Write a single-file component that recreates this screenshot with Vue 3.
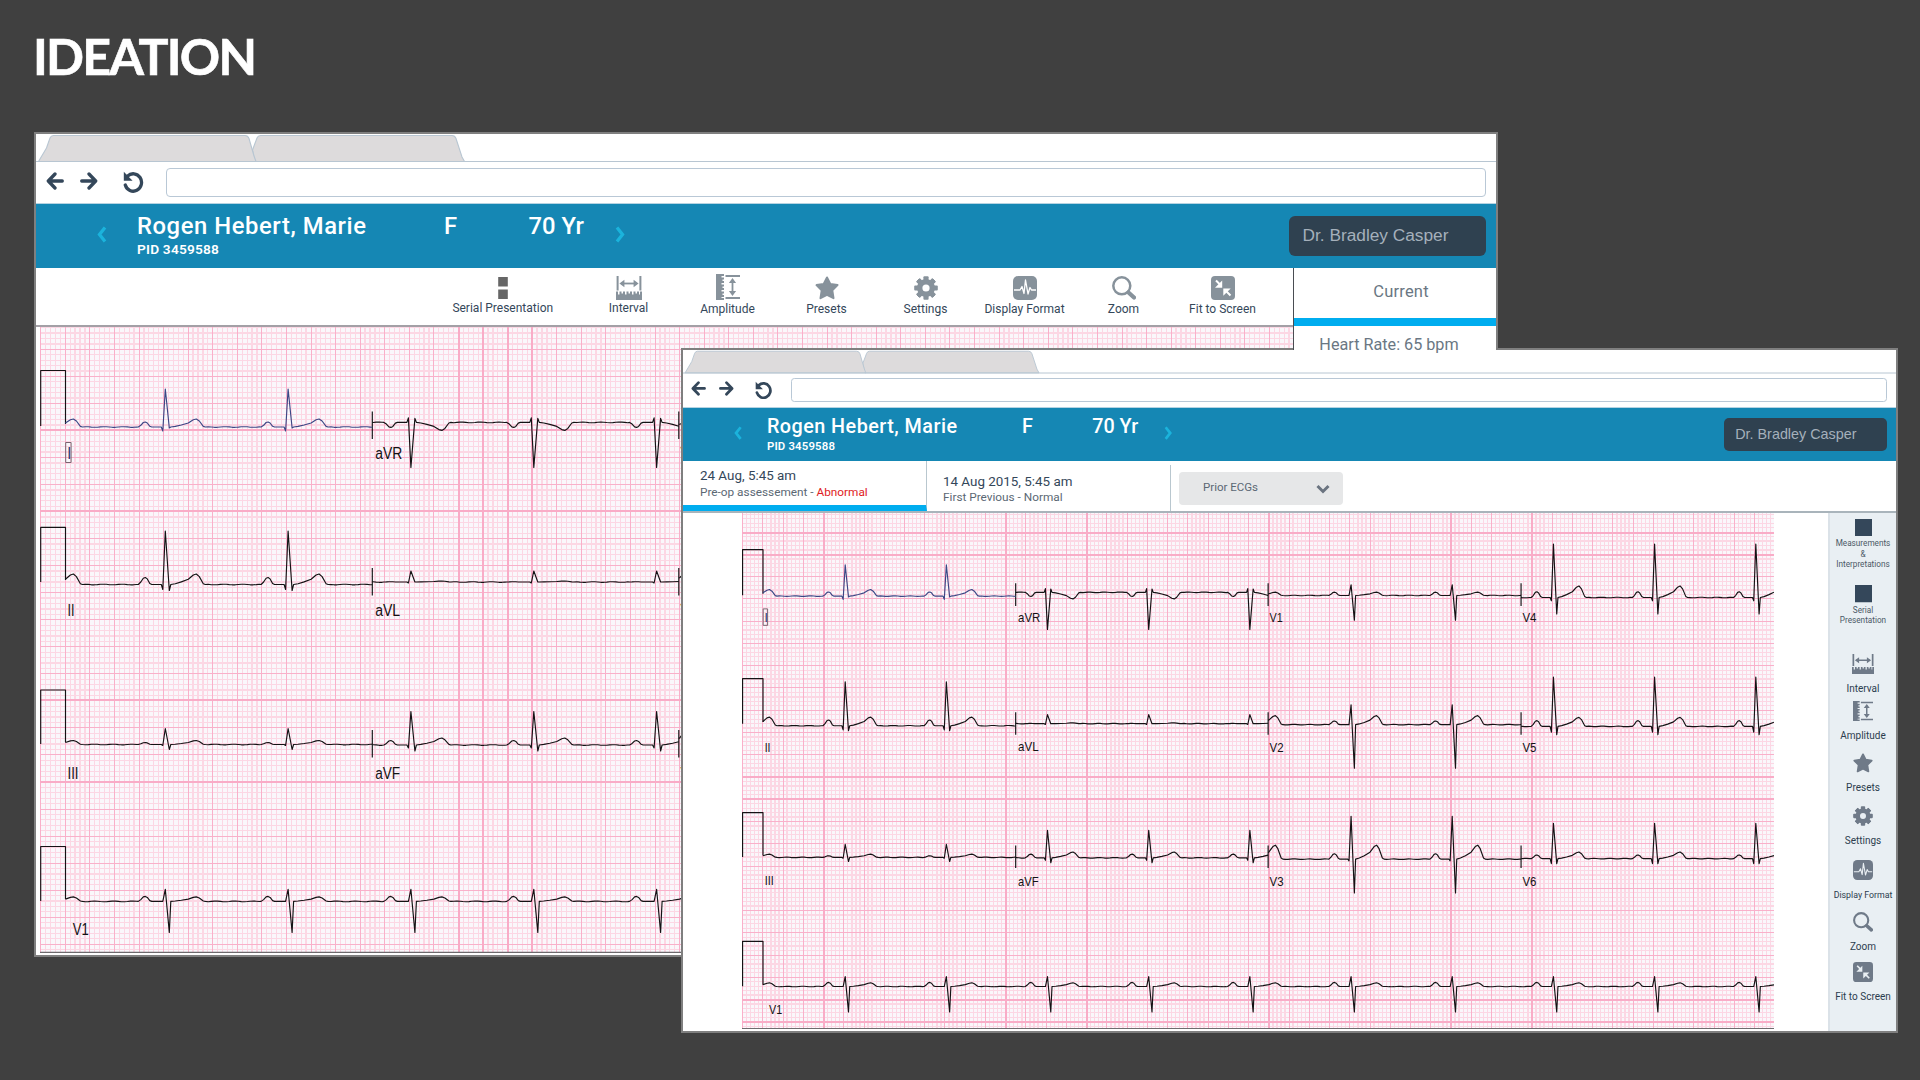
<template>
  <div class="slide">
    <!-- Icon sprite -->
    <svg class="sprite" aria-hidden="true">
      <symbol id="i-serial" viewBox="0 0 24 24"><path d="M7.2 1h9.6v9.6H7.2zM7.2 13.4h9.6V23H7.2z" fill="#666" /></symbol>
      <symbol id="i-square" viewBox="0 0 24 24" preserveAspectRatio="none"><path d="M0 0h24v24H0z" fill="#34475a" /></symbol>
      <symbol id="i-interval" viewBox="0 0 26 24" preserveAspectRatio="none">
        <path d="M1.6 0v14.5M24.4 0v14.5" stroke="currentColor" stroke-width="2" />
        <path d="M5 7.5h16" stroke="currentColor" stroke-width="1.8" />
        <path d="M3.4 7.5l5-3.7v7.4zM22.6 7.5l-5-3.7v7.4z" fill="currentColor" />
        <path d="M0 15.5h2v3h1.5v-3h2v2H7v-2h2v3h1.5v-3h2v2H14v-2h2v3h1.5v-3h2v2H21v-2h2v3h1v-3h2V24H0z" fill="currentColor" />
      </symbol>
      <symbol id="i-amplitude" viewBox="0 0 24 26" preserveAspectRatio="none">
        <path d="M0 0h8v2H5.5v1.5H8v2H6.5V7H8v2H5.5v1.5H8v2H6.5V14H8v2H5.5v1.500H8v2H6.5V21H8v2H5.5v1H8v2H0z" fill="currentColor" />
        <path d="M9.5 2H24M9.5 24H24" stroke="currentColor" stroke-width="2" />
        <path d="M16.5 6v14" stroke="currentColor" stroke-width="1.8" />
        <path d="M16.5 4l3.6 5h-7.2zM16.5 22l3.6-5h-7.2z" fill="currentColor" />
      </symbol>
      <symbol id="i-star" viewBox="0 0 24 24" preserveAspectRatio="none">
        <path d="M12 1.5l3.3 6.4 7.2 1.2-5.2 5.3 1.2 7.8-6.5-3.3-6.5 3.3 1.2-7.8-5.2-5.3 7.2-1.2z" fill="currentColor" stroke="currentColor" stroke-width="2" stroke-linejoin="round" />
      </symbol>
      <symbol id="i-gear" viewBox="0 0 24 24" preserveAspectRatio="none">
        <g fill="currentColor">
          <rect v-for="a in [0, 45, 90, 135]" :key="a" x="9.4" y="0.2" width="5.2" height="23.6" rx="1" :transform="`rotate(${a} 12 12)`" mask="url(#gear-hole)" />
        </g>
        <circle cx="12" cy="12" r="6.3" fill="none" stroke="currentColor" stroke-width="5.4" />
      </symbol>
      <mask id="gear-hole" maskUnits="userSpaceOnUse" x="0" y="0" width="24" height="24">
        <path d="M0 0h24v24H0z" fill="#fff" /><circle cx="12" cy="12" r="5" fill="#000" />
      </mask>
      <symbol id="i-display" viewBox="0 0 24 24" preserveAspectRatio="none">
        <rect width="24" height="24" rx="5" fill="currentColor" />
        <path d="M1 14h6l2-3.5 2 7L12.5 4l2.5 14 2-6.5 1.5 2.5H23" fill="none" stroke="var(--hole)" stroke-width="1.3" stroke-linejoin="round" />
      </symbol>
      <symbol id="i-zoom" viewBox="0 0 24 24" preserveAspectRatio="none">
        <circle cx="9.8" cy="9.8" r="8.5" fill="none" stroke="currentColor" stroke-width="2.5" />
        <path d="M16.5 16.5l5.5 5" stroke="currentColor" stroke-width="4.2" stroke-linecap="round" />
      </symbol>
      <symbol id="i-fit" viewBox="0 0 24 24" preserveAspectRatio="none">
        <rect width="24" height="24" rx="4" fill="currentColor" />
        <path d="M5 4.5l4 4M19.5 19.5l-4-4" stroke="var(--hole)" stroke-width="2" />
        <path d="M11.2 4.5v7.2H4zM12.3 12.5h7.4l-7.4 7.2z" fill="var(--hole)" />
      </symbol>
      <symbol id="i-arrow" viewBox="0 0 18 18">
        <path d="M16.3 9H3M9 2L2.3 9 9 16" fill="none" stroke="currentColor" stroke-width="3.3" stroke-linecap="round" stroke-linejoin="round" />
      </symbol>
      <symbol id="i-reload" viewBox="0 0 21 22">
        <path d="M4.5 5.2A8.3 8.7 0 1 1 2.3 14" fill="none" stroke="currentColor" stroke-width="3.3" stroke-linecap="round" />
        <path d="M.8.8v9h8.8z" fill="currentColor" />
      </symbol>
      <symbol id="i-chevron" viewBox="0 0 10 17">
        <path d="M8 1.5L2.5 8.5 8 15.5" fill="none" stroke="currentColor" stroke-width="3.3" />
      </symbol>
    </svg>

    <h1 class="title">IDEATION</h1>

    <section v-for="win in windows" :key="win.id" :class="['window', win.id]">
      <div class="chrome">
        <svg class="tabs" viewBox="0 0 1460 28.3" preserveAspectRatio="none">
          <g fill="#dddbdc" stroke="#b8c6d2" stroke-width="1.1">
            <path d="M216.5 16L221 4Q222 1.5 224.5 1.5H416Q419 1.5 420 4.5L426 23L428.5 27.5H219z" />
            <path d="M2.5 27.5L10.5 14L14 4Q15 1.5 17.5 1.5H209Q212 1.5 213 4.5L218 22L220 27.5z" />
          </g>
          <path d="M0 27.7H1460" stroke="#b8c6d2" stroke-width="1.2" />
        </svg>
        <div class="navbar">
          <svg class="nav-icon"><use href="#i-arrow" /></svg>
          <svg class="nav-icon forward"><use href="#i-arrow" /></svg>
          <svg class="nav-icon reload"><use href="#i-reload" /></svg>
          <div class="address"></div>
        </div>
      </div>

      <header class="patient">
        <svg class="chev"><use href="#i-chevron" /></svg>
        <div class="who">
          <div class="name">Rogen Hebert, Marie</div>
          <div class="pid">PID 3459588</div>
        </div>
        <div class="sex">F</div>
        <div class="age">70 Yr</div>
        <svg class="chev next"><use href="#i-chevron" /></svg>
        <div class="doctor"><span>Dr. Bradley Casper</span></div>
      </header>

      <div v-if="win.id === 'back'" class="body">
        <div class="toolbar">
          <div v-for="t in tools" :key="t.label" :class="['tool', t.icon]">
            <svg class="tool-icon"><use :href="'#i-' + t.icon" /></svg>
            <span>{{ t.label }}</span>
          </div>
        </div>
        <aside class="current">
          <div class="current-tab">Current</div>
          <p>Heart Rate: 65 bpm</p>
        </aside>
      </div>

      <div v-else class="visits">
        <div class="visit active">
          <div class="date">24 Aug, 5:45 am</div>
          <div class="note">Pre-op assessement - <b>Abnormal</b></div>
        </div>
        <div class="visit">
          <div class="date">14 Aug 2015, 5:45 am</div>
          <div class="note">First Previous - Normal</div>
        </div>
        <div class="prior">
          <span>Prior ECGs</span>
          <svg viewBox="0 0 14 10"><path d="M1.5 2L7 7.5 12.5 2" fill="none" stroke="#6b7480" stroke-width="3" /></svg>
        </div>
      </div>

      <div class="ecg-row">
        <svg class="ecg" viewBox="40 326 1253 627" preserveAspectRatio="none">
          <rect x="40" y="326" width="1253" height="627" fill="#faf7fb" />
          <path class="fine" :d="grid.fine" />
          <path class="coarse" :d="grid.coarse" />
          <path class="bold" :d="win.bold" />
          <path v-for="(p, i) in pulses" :key="'p' + i" class="trace" :d="p" />
          <path class="trace" :d="ticks" />
          <path v-for="l in leads" :key="l.id" :class="['trace', { picked: l.picked }]" :d="tracePath(l)" />
          <text v-for="l in leads" :key="'t' + l.id" :class="{ picked: l.picked }" :x="l.lx" :y="l.ly" :textLength="l.lw" lengthAdjust="spacingAndGlyphs">{{ l.name }}</text>
          <rect x="65.7" y="442.5" width="5.4" height="20" fill="none" stroke="#7a6570" vector-effect="non-scaling-stroke" />
          <path d="M40 952.4H1293" stroke="#6d6a6d" stroke-width="1.2" />
        </svg>
        <nav v-if="win.id === 'front'" class="side">
          <div v-for="t in sideTools" :key="t.label" :class="['side-item', t.icon]" :style="{ height: t.h + 'px' }">
            <svg><use :href="'#i-' + t.icon" /></svg>
            <span>{{ t.label }}</span>
          </div>
        </nav>
      </div>
    </section>
  </div>
</template>

<script setup>
const tools = [
  { icon: 'serial', label: 'Serial Presentation' },
  { icon: 'interval', label: 'Interval' },
  { icon: 'amplitude', label: 'Amplitude' },
  { icon: 'star', label: 'Presets' },
  { icon: 'gear', label: 'Settings' },
  { icon: 'display', label: 'Display Format' },
  { icon: 'zoom', label: 'Zoom' },
  { icon: 'fit', label: 'Fit to Screen' },
]

const sideTools = [
  { icon: 'square', label: 'Measurements\n&\nInterpretations', h: 66.5 },
  { icon: 'square', label: 'Serial\nPresentation', h: 69 },
  { icon: 'interval', label: 'Interval', h: 47 },
  { icon: 'amplitude', label: 'Amplitude', h: 52 },
  { icon: 'star', label: 'Presets', h: 52.5 },
  { icon: 'gear', label: 'Settings', h: 54.5 },
  { icon: 'display', label: 'Display Format', h: 52 },
  { icon: 'zoom', label: 'Zoom', h: 50 },
  { icon: 'fit', label: 'Fit to Screen', h: 40 },
]

const hLine = y => `M40 ${y}H1293`
const vLine = x => `M${x} 326V953`

const windows = [
  { id: 'back', bold: [429.8, 511, 700.3, 781.5].map(hLine).concat([458.6, 483.2, 507.8, 532.3].map(vLine)).join('') },
  { id: 'front', bold: [349.7, 376.7, 647, 674, 917.5, 944.5].map(hLine).concat([139, 360.2, 458.6, 679.8, 901, 999.3].map(vLine)).join('') },
]

// 5 x 5 paper grid
const grid = { fine: '', coarse: '' }
for (let i = 0; i < 256; i++) {
  const x = +(40.7 + i * 4.915).toFixed(2)
  if (x < 1293) grid[i % 5 ? 'fine' : 'coarse'] += vLine(x)
}
for (let i = 1; i < 118; i++) {
  const y = +(322.3 + i * 5.408).toFixed(2)
  if (y > 326 && y < 953) grid[i % 5 ? 'fine' : 'coarse'] += hLine(y)
}

const cols = [65.3, 372.3, 678.8, 985.9, 1293]

// p, q, r, s, t are wave heights over the base line
const leads = [
  { id: 'I', name: 'I', col: 0, base: 427, p: 5, q: -4, r: 38, s: -1, t: 8, lx: 67.2, ly: 458.5, lw: 4, picked: true },
  { id: 'II', name: 'II', col: 0, base: 584.5, p: 7, q: -5, r: 53.5, s: -6, t: 10.5, lx: 67.5, ly: 616, lw: 7 },
  { id: 'III', name: 'III', col: 0, base: 744.5, p: 2, q: -1, r: 16, s: -5, t: 4, lx: 67.5, ly: 778.5, lw: 11 },
  { id: 'aVR', name: 'aVR', col: 1, base: 422.4, p: -5, q: 4.5, r: -45, s: 4, t: -8, lx: 375.2, ly: 459, lw: 27 },
  { id: 'aVL', name: 'aVL', col: 1, base: 582, p: 0.3, q: -1, r: 11, s: 0, t: 1, lx: 375.2, ly: 615.8, lw: 25 },
  { id: 'aVF', name: 'aVF', col: 1, base: 745, p: 4.5, q: -3, r: 33.5, s: -6, t: 7, lx: 375.2, ly: 778.8, lw: 25 },
  { id: 'V1', name: 'V1', col: 2, base: 426.2, p: 4, q: 0, r: 13, s: -30, t: 4, lx: 680.5, ly: 459, lw: 16 },
  { id: 'V2', name: 'V2', col: 2, base: 583.2, p: 4.5, q: 0, r: 24, s: -53, t: 11, lx: 680.5, ly: 616, lw: 17 },
  { id: 'V3', name: 'V3', col: 2, base: 746.6, p: 6.5, q: -2, r: 52, s: -41, t: 17, lx: 680.5, ly: 778.8, lw: 17 },
  { id: 'V4', name: 'V4', col: 3, base: 428.7, p: 7, q: -4, r: 65, s: -20, t: 14, lx: 987.5, ly: 459, lw: 17 },
  { id: 'V5', name: 'V5', col: 3, base: 585.3, p: 7, q: -7, r: 60, s: -10, t: 11, lx: 987.5, ly: 616, lw: 17 },
  { id: 'V6', name: 'V6', col: 3, base: 746, p: 4.5, q: -6, r: 43, s: -6, t: 8, lx: 987.5, ly: 778.8, lw: 17 },
  { id: 'rhythm', name: 'V1', col: 0, full: true, base: 901.4, p: 5, q: 0, r: 12, s: -31, t: 4.5, lx: 72.8, ly: 935, lw: 16 },
]

function tracePath(l) {
  const x0 = cols[l.col]
  const x1 = l.full ? cols[4] : cols[l.col + 1]
  const pts = []
  for (let k = 0; k < 12; k++) {
    const c = 42.4 + k * 122.85
    const beat = [
      [-27, 0], [-24.5, l.p * 0.35], [-22, l.p * 0.9], [-20, l.p], [-18, l.p * 0.8], [-15.5, l.p * 0.15], [-13.5, 0], [-4, 0],
      [-2.5, l.q], [0, l.r], [4, l.s], [5.5, 0], [10, l.t * 0.08], [16, l.t * 0.25], [23, l.t * 0.5],
      [28, l.t * 0.9], [31, l.t], [34, l.t * 0.75], [38, l.t * 0.08], [40, 0],
    ]
    // slight muscle noise on the flat part
    for (let n = 43; n < 95; n += 3) beat.push([n, Math.sin(n * 12.9 + k * 7 + l.base) * 0.35])
    beat.forEach(([dx, h]) => pts.push([c + dx, l.base - h]))
  }
  const out = []
  for (let i = 1; i < pts.length; i++) {
    const [ax, ay] = pts[i - 1]
    const [bx, by] = pts[i]
    const at = x => ay + ((by - ay) * (x - ax)) / (bx - ax)
    if (ax < x0 && bx >= x0) out.push([x0, at(x0)])
    if (bx >= x0 && bx <= x1) out.push([bx, by])
    if (ax <= x1 && bx > x1) out.push([x1, at(x1)])
  }
  return 'M' + out.map(([x, y]) => `${x.toFixed(1)} ${y.toFixed(1)}`).join('L')
}

const pulses = [[370.5, 426], [527.3, 582], [690, 744], [846.5, 901]]
  .map(([top, low]) => `M40.7 ${low}V${top}H65.5V${low - 2}`)

const ticks = cols.slice(1, 4)
  .map(x => [411.5, 568, 730].map(y => `M${x} ${y}v27.5`).join(''))
  .join('')
</script>

<style>
body { margin: 0; background: #404040; }
</style>

<style scoped>
.slide { position: relative; width: 1920px; height: 1080px; overflow: hidden; background: #404040; font-family: Roboto, "Noto Sans", sans-serif; color: #34475a; }
.sprite { position: absolute; width: 0; height: 0; }
.title { margin: 0; padding: 26px 0 0 33px; font: 700 50px/60px Lato, sans-serif; color: #fff; letter-spacing: -1.8px; -webkit-text-stroke: 0.6px #fff; }

/* The windows lie on the slide canvas; everything inside scales with em */
.window { position: absolute; box-sizing: border-box; border: 2px solid #7f7f7f; background: #fff; display: flex; flex-direction: column; overflow: hidden; }
.back { left: 34px; top: 132px; width: 1464px; height: 825px; font-size: 10px; --icon: #87929b; --hole: #fff; }
.front { left: 681px; top: 348px; width: 1217px; height: 685px; font-size: 8.31px; --icon: #6f7a88; --hole: #e9eff3; }

.chrome { height: 6.95em; box-sizing: border-box; border-bottom: 1px solid #b5d3e2; flex: none; }
.tabs { display: block; width: 100%; height: 2.83em; }
.navbar { display: flex; align-items: center; height: 4em; padding: 0 1.05em 0 0.95em; color: #34475a; }
.nav-icon { width: 1.8em; height: 1.8em; flex: none; margin-top: -0.35em; }
.forward { transform: scaleX(-1); margin-left: 1.6em; }
.reload { width: 2.1em; height: 2.2em; margin: 0 2.15em 0 2.55em; }
.address { flex: 1; height: 2.95em; box-sizing: border-box; border: 1px solid #b9c8d6; border-radius: 0.4em; }

.patient { display: flex; flex: none; height: 6.45em; background: #1587b4; color: #fff; padding: 0 1.05em 0 6.1em; box-sizing: border-box; }
.chev { width: 1em; height: 1.7em; color: #1bb3dc; margin-top: 2.25em; flex: none; }
.next { transform: scaleX(-1); }
.who { width: 30.7em; padding-left: 3em; }
.name, .sex, .age { font-size: 2.38em; line-height: 1.2em; font-weight: 500; margin-top: 0.37em; white-space: nowrap; }
.name { letter-spacing: 0.024em; }
.pid { font-size: 1.37em; line-height: 1.3em; font-weight: 600; margin-top: 0; letter-spacing: 0.015em; }
.sex { width: 3.55em; }
.age { width: 3.63em; }
.doctor { margin: 1.2em 0 0 auto; width: 19.7em; height: 4em; box-sizing: border-box; padding-left: 1.4em; border-radius: 0.6em; background: #2f4150; color: #a5b0bb; display: flex; align-items: center; font-family: "Liberation Sans", Arial, sans-serif; }
.doctor span { font-size: 1.73em; white-space: nowrap; }

.body { display: flex; height: 59px; flex: none; position: relative; z-index: 1; }
.toolbar { flex: 1; display: grid; grid-template-columns: 152.5px repeat(7, 99px); padding: 6px 0 0 390.5px; border-bottom: 2px solid #a3a0a6; box-sizing: border-box; }
.tool { display: flex; flex-direction: column; align-items: center; font-size: 12px; white-space: nowrap; }
.tool-icon { width: 24px; height: 24px; margin-top: 2px; color: var(--icon); }
.tool.interval .tool-icon { width: 26px; }
.tool.amplitude .tool-icon { height: 26px; margin: 0; }
.tool.serial .tool-icon { margin: 2px 0 0; }
.tool.serial span, .tool.interval span { margin-top: 0; }
.tool span { line-height: 16px; margin-top: 1px; }
.current { width: 202px; height: 82px; border-left: 1px solid #4a4d52; background: #fff; text-align: center; color: #6a7783; }
.current-tab { height: 50px; line-height: 48px; padding-left: 12px; border-bottom: 8px solid #00adef; font-size: 16.5px; letter-spacing: 0.2px; }
.current p { margin: 9px 12px 0 0; line-height: 20px; font-size: 16.2px; }

.visits { display: flex; flex: none; height: 50px; border-bottom: 2px solid #a9b4bb; box-sizing: content-box; }
.visit { box-sizing: border-box; width: 244px; padding: 8px 0 0 16px; border-right: 1px solid #b9c7cf; margin-top: 4px; }
.visit.active { margin-top: 0; padding: 5.5px 0 0 17px; border-bottom: 6px solid #00adef; }
.date { font-size: 13.4px; line-height: 17px; white-space: nowrap; }
.note { font-size: 11.8px; line-height: 15px; color: #5b6874; white-space: nowrap; }
.active .note { margin-top: 1px; }
.note b { font-weight: 400; color: #e01b24; }
.prior { display: flex; align-items: center; justify-content: space-between; box-sizing: border-box; width: 164px; height: 33px; margin: 11px 0 0 8px; padding: 0 13px 3px 24px; border-radius: 4px; background: #e6e7e8; font-size: 11.5px; color: #5b6874; }
.prior svg { width: 14px; height: 10px; margin-top: 3px; }

.ecg-row { display: flex; flex: 1; }
.ecg { display: block; flex: none; }
.back .ecg { width: 1253px; height: 627px; margin: -1px 0 0 4px; }
.front .ecg { width: 1032px; height: 516px; margin: -0.4px 0 0 59.3px; }
.fine, .coarse, .bold { fill: none; vector-effect: non-scaling-stroke; shape-rendering: crispEdges; }
.fine { stroke: #fcd7e4; stroke-width: 1.25; }
.coarse { stroke: #f9b0ca; stroke-width: 1; }
.bold { stroke: #f9acc7; stroke-width: 2; }
.trace { fill: none; stroke: #141214; stroke-width: 1.15; vector-effect: non-scaling-stroke; stroke-linejoin: round; }
.trace.picked { stroke: #3c4785; }
.ecg text { font-family: "Liberation Sans", Arial, sans-serif; font-size: 16px; fill: #141214; }
.ecg text.picked { fill: #26346e; }

.side { width: 68px; box-sizing: border-box; margin-left: auto; padding-top: 5.5px; background: #e9eff3; border-left: 2px solid #dbe2e8; display: flex; flex-direction: column; }
.side-item { display: flex; flex-direction: column; align-items: center; flex: none; font-size: 10px; line-height: 14px; text-align: center; white-space: pre; color: #2c3d4e; }
.side-item svg { width: 20px; height: 20px; margin-bottom: 8px; flex: none; color: var(--icon); }
.side-item.interval svg { width: 22px; }
.side-item.display { font-size: 8.8px; }
.side-item.square { font-size: 8.2px; line-height: 10.5px; color: #4b5966; }
.side-item.square svg { width: 17px; height: 17.5px; margin-bottom: 2px; }
</style>
